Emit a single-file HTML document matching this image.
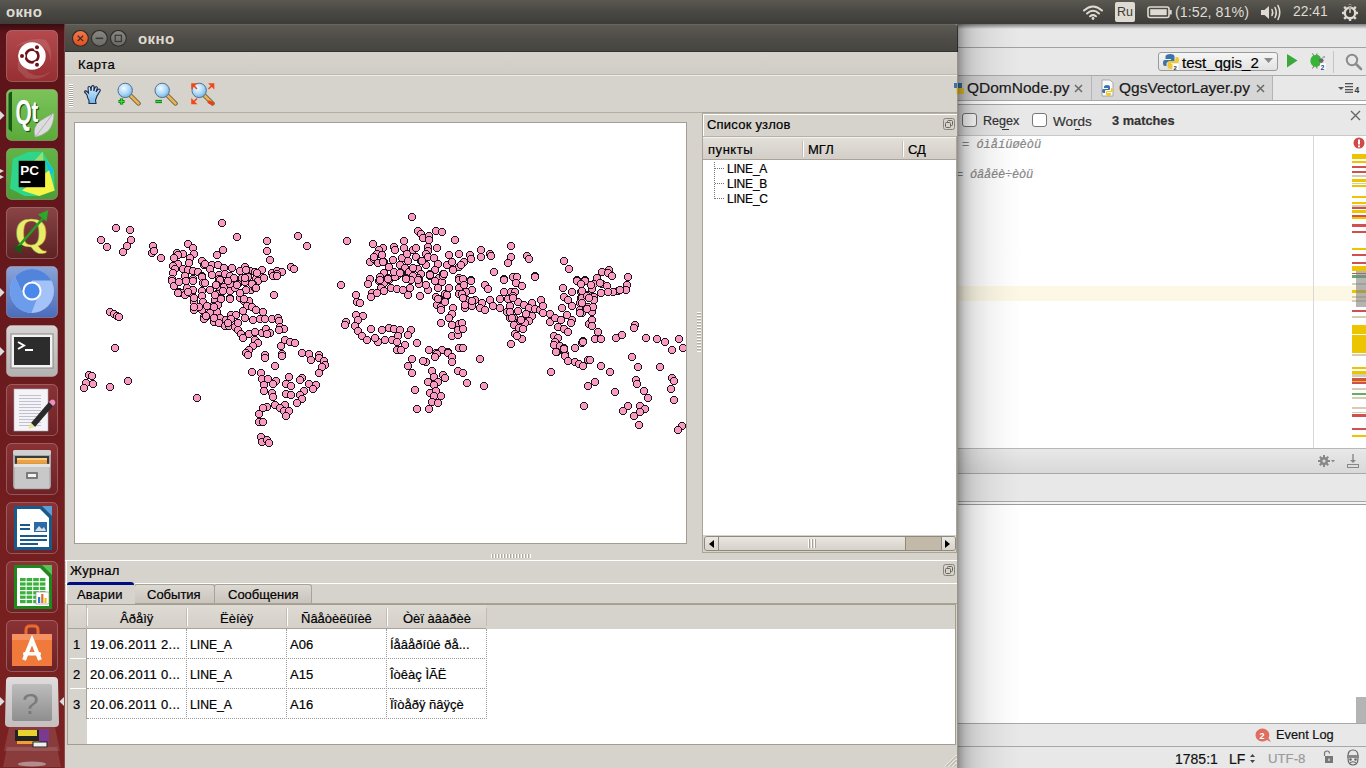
<!DOCTYPE html>
<html><head><meta charset="utf-8">
<style>
*{margin:0;padding:0;box-sizing:border-box}
html,body{width:1366px;height:768px;overflow:hidden;background:#fff;font-family:"Liberation Sans",sans-serif;position:relative}
.a{position:absolute}
.nw{white-space:nowrap}
.t{position:absolute;white-space:nowrap;font-size:13px;color:#000;line-height:1;-webkit-text-stroke:0.2px currentColor}
.pt{position:absolute;white-space:nowrap;font-size:14px;color:#dfdbd2;line-height:1}
.hl{position:absolute;height:1px}
.vl{position:absolute;width:1px}
</style></head><body>
<div class="a" style="left:0;top:0;width:1366px;height:24px;background:linear-gradient(#5a5850,#4a4944 45%,#3d3c38)"></div>
<div class="pt" style="left:6px;top:4px;font-size:15px;font-weight:bold;letter-spacing:0.3px">окно</div>
<!-- wifi -->
<svg class="a" style="left:1082px;top:4px" width="22" height="16" viewBox="0 0 22 16">
 <g fill="none" stroke="#dfdbd2" stroke-width="2" stroke-linecap="round">
  <path d="M2 6.5 Q11 -1.5 20 6.5"/><path d="M5 9.5 Q11 4 17 9.5"/><path d="M8 12.3 Q11 10 14 12.3"/>
 </g><circle cx="11" cy="14.5" r="1.4" fill="#dfdbd2"/>
</svg>
<div class="a" style="left:1115px;top:2px;width:20px;height:20px;background:#dfdbd2;border-radius:2px"></div>
<div class="pt" style="left:1117px;top:6px;font-size:12.5px;color:#3c3b37">Ru</div>
<!-- battery -->
<svg class="a" style="left:1147px;top:6px" width="26" height="13" viewBox="0 0 26 13">
 <rect x="1" y="1" width="21" height="10.5" rx="2" fill="none" stroke="#dfdbd2" stroke-width="1.6"/>
 <rect x="3.2" y="3.2" width="16.5" height="6" fill="#dfdbd2"/>
 <rect x="22.5" y="4" width="2.2" height="4.5" fill="#dfdbd2"/>
</svg>
<div class="pt" style="left:1175px;top:5px;font-size:14.3px">(1:52, 81%)</div>
<!-- volume -->
<svg class="a" style="left:1260px;top:3px" width="22" height="19" viewBox="0 0 22 19">
 <path d="M1 7 H4.5 L9 3 V16 L4.5 12 H1 Z" fill="#dfdbd2"/>
 <g fill="none" stroke="#dfdbd2" stroke-width="1.6" stroke-linecap="round">
 <path d="M12 6.5 Q13.5 9.5 12 12.5"/><path d="M15 4.5 Q17.5 9.5 15 14.5"/><path d="M18 2.5 Q21.5 9.5 18 16.5"/></g>
</svg>
<div class="pt" style="left:1293px;top:5px;font-size:13.9px">22:41</div>
<!-- power -->
<svg class="a" style="left:1341px;top:3px" width="18" height="18" viewBox="0 0 18 18">
 <g fill="#dfdbd2"><circle cx="9" cy="10" r="6.4"/>
 <rect x="7.8" y="1.5" width="2.4" height="3"/><rect x="7.8" y="15.5" width="2.4" height="2.5"/>
 <rect x="1" y="8.8" width="3" height="2.4"/><rect x="14" y="8.8" width="3" height="2.4"/>
 <rect x="2.8" y="3.6" width="2.6" height="2.4" transform="rotate(45 4.1 4.8)"/><rect x="12.6" y="13.8" width="2.6" height="2.4" transform="rotate(45 13.9 15)"/>
 <rect x="2.8" y="13.8" width="2.6" height="2.4" transform="rotate(-45 4.1 15)"/><rect x="12.6" y="3.6" width="2.6" height="2.4" transform="rotate(-45 13.9 4.8)"/>
 </g><circle cx="9" cy="10" r="4" fill="#3e3d39"/>
 <rect x="7.9" y="2" width="2.2" height="8" fill="#3e3d39"/><rect x="8.3" y="3" width="1.4" height="7" fill="#dfdbd2"/>
</svg>
<div class="a" style="left:0;top:24px;width:65px;height:744px;background:linear-gradient(#5a1419 0%,#5e151a 10%,#6a1a1d 45%,#782020 80%,#7a2121 100%)"></div>
<div class="a" style="left:0;top:24px;width:65px;height:8px;background:linear-gradient(#3a0c0f,rgba(58,12,15,0))"></div>
<div class="a" style="left:64px;top:24px;width:1px;height:744px;background:rgba(255,255,255,0.18)"></div>
<svg class="a" style="left:6px;top:30px" width="52" height="52" viewBox="0 0 52 52"><defs><linearGradient id="g0" x1="0" y1="0" x2="0" y2="1"><stop offset="0" stop-color="#b44a4e"/><stop offset="1" stop-color="#962e32"/></linearGradient></defs><rect x="0.5" y="0.5" width="51" height="51" rx="5" fill="url(#g0)" stroke="rgba(255,255,255,0.25)"/><path d="M6 20 Q20 6 40 10 Q48 20 44 34 Q46 18 30 14 Q14 12 6 20 Z" fill="rgba(255,255,255,0.12)"/><path d="M12 40 Q10 22 24 16 Q14 28 22 42 Q34 50 46 40 Q36 52 20 48 Z" fill="rgba(255,255,255,0.12)"/><circle cx="26" cy="26" r="13.7" fill="#fff"/><circle cx="26" cy="26" r="6.4" fill="none" stroke="#6e1418" stroke-width="2.6"/><circle cx="16" cy="26" r="3.6" fill="#fff"/><circle cx="31" cy="17.3" r="3.6" fill="#fff"/><circle cx="31" cy="34.7" r="3.6" fill="#fff"/><circle cx="16" cy="26" r="2" fill="#6e1418"/><circle cx="31" cy="17.3" r="2" fill="#6e1418"/><circle cx="31" cy="34.7" r="2" fill="#6e1418"/></svg>
<svg class="a" style="left:6px;top:89px" width="52" height="52" viewBox="0 0 52 52"><defs><linearGradient id="g1" x1="0" y1="0" x2="0" y2="1"><stop offset="0" stop-color="#7cc45a"/><stop offset="1" stop-color="#5aaa3a"/></linearGradient></defs><rect x="0.5" y="0.5" width="51" height="51" rx="5" fill="url(#g1)" stroke="rgba(255,255,255,0.25)"/><path d="M2.5 5 Q3 3 6 2.5 L6 43 L2.5 40 Z" fill="#145a14"/><g transform="translate(9.5,35) scale(0.58,1)"><text x="1.6" y="1.2" font-family="Liberation Sans" font-weight="bold" font-size="36" fill="#0e4a0e">Q</text><text x="0" y="0" font-family="Liberation Sans" font-weight="bold" font-size="36" fill="#fff">Q</text></g><g transform="translate(25.5,33) scale(0.7,1)"><text x="1.6" y="1.2" font-family="Liberation Sans" font-weight="bold" font-size="29" fill="#0e4a0e">t</text><text x="0" y="0" font-family="Liberation Sans" font-weight="bold" font-size="29" fill="#fff">t</text></g><path d="M29 48 Q26 38 34 32 Q40 28 48 24 Q48 36 42 42 Q36 47 29 48 Z" fill="#dcdcdc" stroke="#9a9a9a" stroke-width="0.6"/><path d="M30 47 L46 26" stroke="#888" stroke-width="0.5"/></svg>
<svg class="a" style="left:6px;top:148px" width="52" height="52" viewBox="0 0 52 52"><defs><linearGradient id="g2" x1="0" y1="0" x2="0" y2="1"><stop offset="0" stop-color="#62b446"/><stop offset="1" stop-color="#4a9e36"/></linearGradient></defs><rect x="0.5" y="0.5" width="51" height="51" rx="5" fill="url(#g2)" stroke="rgba(255,255,255,0.25)"/><path d="M6.8 10.5 L22.3 4.1 L36.8 3.7 L47.8 22.3 L48.7 42.4 L33.2 47.9 L18.6 47.9 L4 40.6 Z" fill="#2ed58a"/><path d="M27.7 13.4 L36.8 3.7 L37.8 15.2 Z" fill="#9ae070"/><path d="M39.6 12 L47.8 22.3 L44.1 28.7 Z" fill="#10c0f0"/><path d="M15.9 42.4 L43.2 22.3 L48.7 42.4 L33.2 47.9 Z" fill="#f5f545"/><rect x="12.7" y="12.8" width="26.4" height="26.4" fill="#000"/><text x="14.3" y="26.6" font-family="Liberation Sans" font-weight="bold" font-size="13.5" fill="#fff">PC</text><rect x="14.5" y="33.2" width="10" height="1.7" fill="#fff"/></svg>
<svg class="a" style="left:6px;top:207px" width="52" height="52" viewBox="0 0 52 52"><defs><linearGradient id="g3" x1="0" y1="0" x2="0" y2="1"><stop offset="0" stop-color="#8a4446"/><stop offset="1" stop-color="#5d2224"/></linearGradient></defs><rect x="0.5" y="0.5" width="51" height="51" rx="5" fill="url(#g3)" stroke="rgba(255,255,255,0.25)"/><text x="8.5" y="40" font-family="Liberation Serif" font-weight="bold" font-size="43" fill="#e8ec6a" stroke="#9a9a30" stroke-width="0.4">Q</text><path d="M12 40 L39 9" stroke="#22a022" stroke-width="2.6"/><path d="M31.8 7.6 L42.3 3 L40.5 14.4 Z" fill="#2aa82a"/><path d="M6.8 40.4 L15.9 37.7 L15.4 46.8 Z" fill="#145a14"/></svg>
<svg class="a" style="left:6px;top:266px" width="52" height="52" viewBox="0 0 52 52"><defs><linearGradient id="g4" x1="0" y1="0" x2="0" y2="1"><stop offset="0" stop-color="#8aa4d8"/><stop offset="1" stop-color="#4a6cbc"/></linearGradient></defs><rect x="0.5" y="0.5" width="51" height="51" rx="5" fill="url(#g4)" stroke="rgba(255,255,255,0.25)"/><defs><clipPath id="chc"><circle cx="26" cy="25" r="22"/></clipPath></defs><g clip-path="url(#chc)"><rect x="0" y="0" width="52" height="52" fill="#a2c2f8"/><path d="M1.7 -5 L60 -5 L60 14.5 L26 14.5 L26 25 L15.9 25.9 Z" fill="#5284dc"/><path d="M1.7 -5 L15.9 25.9 L26 25 L30.5 34.1 L20.2 60 L-5 60 L-5 -5 Z" fill="#6c9cec"/></g><circle cx="26" cy="25" r="9.6" fill="#fff"/><circle cx="26" cy="25" r="7.6" fill="#4a88ec"/></svg>
<svg class="a" style="left:6px;top:325px" width="52" height="52" viewBox="0 0 52 52"><defs><linearGradient id="g5" x1="0" y1="0" x2="0" y2="1"><stop offset="0" stop-color="#d6d4d2"/><stop offset="1" stop-color="#b4b2b0"/></linearGradient></defs><rect x="0.5" y="0.5" width="51" height="51" rx="5" fill="url(#g5)" stroke="rgba(255,255,255,0.25)"/><rect x="5" y="9" width="42" height="34" fill="#f2f2f2" stroke="#888" stroke-width="1"/><rect x="8" y="12" width="36" height="28" fill="#2c2c2c"/><path d="M12 17 L18 20.5 L12 24" stroke="#fff" stroke-width="2" fill="none"/><rect x="19" y="24" width="8" height="2" fill="#fff"/></svg>
<svg class="a" style="left:6px;top:384px" width="52" height="52" viewBox="0 0 52 52"><defs><linearGradient id="g6" x1="0" y1="0" x2="0" y2="1"><stop offset="0" stop-color="#8a3236"/><stop offset="1" stop-color="#6e2226"/></linearGradient></defs><rect x="0.5" y="0.5" width="51" height="51" rx="5" fill="url(#g6)" stroke="rgba(255,255,255,0.25)"/><rect x="8" y="5" width="34" height="42" fill="#f4f4f8" stroke="#aab" stroke-width="0.6"/><rect x="13" y="11" width="22" height="0.8" fill="#b4b4c4"/><rect x="13" y="14" width="22" height="0.8" fill="#b4b4c4"/><rect x="13" y="17" width="22" height="0.8" fill="#b4b4c4"/><rect x="13" y="20" width="22" height="0.8" fill="#b4b4c4"/><rect x="13" y="23" width="22" height="0.8" fill="#b4b4c4"/><rect x="13" y="26" width="22" height="0.8" fill="#b4b4c4"/><rect x="13" y="29" width="22" height="0.8" fill="#b4b4c4"/><rect x="13" y="32" width="22" height="0.8" fill="#b4b4c4"/><rect x="13" y="35" width="22" height="0.8" fill="#b4b4c4"/><rect x="13" y="38" width="22" height="0.8" fill="#b4b4c4"/><rect x="13" y="41" width="22" height="0.8" fill="#b4b4c4"/><path d="M25 39 L43 18 L47 22 L29 43 Z" fill="#2a2a2a"/><path d="M22 45 L25 39 L29 43 Z" fill="#f0e090"/><path d="M43 18 L45 16 Q47 15 48.5 16.5 Q50 18 49 20 L47 22 Z" fill="#e890c0"/></svg>
<svg class="a" style="left:6px;top:443px" width="52" height="52" viewBox="0 0 52 52"><defs><linearGradient id="g7" x1="0" y1="0" x2="0" y2="1"><stop offset="0" stop-color="#8a3236"/><stop offset="1" stop-color="#6e2226"/></linearGradient></defs><rect x="0.5" y="0.5" width="51" height="51" rx="5" fill="url(#g7)" stroke="rgba(255,255,255,0.25)"/><rect x="7" y="7" width="38" height="38" rx="2" fill="#a8a8a8"/><rect x="7" y="7" width="38" height="5" rx="2" fill="#d0d0d0"/><rect x="9" y="13" width="34" height="9" fill="#3a3a3a"/><rect x="11" y="15" width="30" height="7" fill="#f0a040"/><rect x="11" y="15" width="30" height="2" fill="#f8d080"/><rect x="8" y="21" width="36" height="25" rx="1.5" fill="#c8c8c8" stroke="#8a8a8a" stroke-width="0.6"/><rect x="8" y="21" width="36" height="3" fill="#e4e4e4"/><rect x="20" y="29" width="12" height="7" rx="1" fill="#7a7a7a"/><rect x="22" y="31" width="8" height="3" fill="#f4f4f4"/></svg>
<svg class="a" style="left:6px;top:502px" width="52" height="52" viewBox="0 0 52 52"><defs><linearGradient id="g8" x1="0" y1="0" x2="0" y2="1"><stop offset="0" stop-color="#8a3236"/><stop offset="1" stop-color="#6e2226"/></linearGradient></defs><rect x="0.5" y="0.5" width="51" height="51" rx="5" fill="url(#g8)" stroke="rgba(255,255,255,0.25)"/><path d="M8 4 H36 L46 14 V48 H8 Z" fill="#1a5a8a"/><path d="M11 7 H34 L43 16 V45 H11 Z" fill="#fff"/><path d="M36 4 L46 4 L46 14 Z" fill="#59a0d9"/><rect x="28" y="20" width="13" height="10" fill="#2a6aa8"/><path d="M29 29 L33 24 L36 27 L38 25 L40 29 Z" fill="#ddd"/><rect x="14" y="22" width="10" height="2" fill="#1a5a8a"/><rect x="14" y="26" width="10" height="2" fill="#1a5a8a"/><rect x="14" y="33" width="27" height="2" fill="#1a5a8a"/><rect x="14" y="37" width="27" height="2" fill="#1a5a8a"/><rect x="14" y="41" width="18" height="2" fill="#1a5a8a"/></svg>
<svg class="a" style="left:6px;top:561px" width="52" height="52" viewBox="0 0 52 52"><defs><linearGradient id="g9" x1="0" y1="0" x2="0" y2="1"><stop offset="0" stop-color="#8a3236"/><stop offset="1" stop-color="#6e2226"/></linearGradient></defs><rect x="0.5" y="0.5" width="51" height="51" rx="5" fill="url(#g9)" stroke="rgba(255,255,255,0.25)"/><path d="M8 4 H36 L46 14 V48 H8 Z" fill="#1e8a1e"/><path d="M11 7 H34 L43 16 V45 H11 Z" fill="#fff"/><path d="M36 4 L46 4 L46 14 Z" fill="#5ac05a"/><rect x="14.0" y="17.0" width="5.6" height="3.2" fill="#3cb03c"/><rect x="20.6" y="17.0" width="5.6" height="3.2" fill="#3cb03c"/><rect x="27.2" y="17.0" width="5.6" height="3.2" fill="#3cb03c"/><rect x="33.8" y="17.0" width="5.6" height="3.2" fill="#3cb03c"/><rect x="14.0" y="21.4" width="5.6" height="3.2" fill="#3cb03c"/><rect x="20.6" y="21.4" width="5.6" height="3.2" fill="#3cb03c"/><rect x="27.2" y="21.4" width="5.6" height="3.2" fill="#3cb03c"/><rect x="33.8" y="21.4" width="5.6" height="3.2" fill="#3cb03c"/><rect x="14.0" y="25.8" width="5.6" height="3.2" fill="#3cb03c"/><rect x="20.6" y="25.8" width="5.6" height="3.2" fill="#3cb03c"/><rect x="27.2" y="25.8" width="5.6" height="3.2" fill="#3cb03c"/><rect x="33.8" y="25.8" width="5.6" height="3.2" fill="#3cb03c"/><rect x="14.0" y="30.2" width="5.6" height="3.2" fill="#3cb03c"/><rect x="20.6" y="30.2" width="5.6" height="3.2" fill="#3cb03c"/><rect x="27.2" y="30.2" width="5.6" height="3.2" fill="#3cb03c"/><rect x="33.8" y="30.2" width="5.6" height="3.2" fill="#3cb03c"/><rect x="14.0" y="34.6" width="5.6" height="3.2" fill="#3cb03c"/><rect x="20.6" y="34.6" width="5.6" height="3.2" fill="#3cb03c"/><rect x="27.2" y="34.6" width="5.6" height="3.2" fill="#3cb03c"/><rect x="33.8" y="34.6" width="5.6" height="3.2" fill="#3cb03c"/><rect x="14.0" y="39.0" width="5.6" height="3.2" fill="#3cb03c"/><rect x="20.6" y="39.0" width="5.6" height="3.2" fill="#3cb03c"/><rect x="27.2" y="39.0" width="5.6" height="3.2" fill="#3cb03c"/><rect x="33.8" y="39.0" width="5.6" height="3.2" fill="#3cb03c"/><rect x="30" y="31" width="13" height="12" fill="#fff" stroke="#888" stroke-width="0.6"/><rect x="32" y="36" width="2.2" height="6" fill="#2a7ad0"/><rect x="35.2" y="33" width="2.2" height="9" fill="#e07020"/><rect x="38.4" y="37" width="2.2" height="5" fill="#f0c020"/></svg>
<svg class="a" style="left:6px;top:620px" width="52" height="52" viewBox="0 0 52 52"><defs><linearGradient id="g10" x1="0" y1="0" x2="0" y2="1"><stop offset="0" stop-color="#8a3236"/><stop offset="1" stop-color="#6e2226"/></linearGradient></defs><rect x="0.5" y="0.5" width="51" height="51" rx="5" fill="url(#g10)" stroke="rgba(255,255,255,0.25)"/><path d="M20 16 V10 Q20 6 24 6 H28 Q32 6 32 10 V16" stroke="#e86a30" stroke-width="3" fill="none"/><path d="M6 14 H46 V46 H6 Z" fill="#ef7a3c"/><path d="M6 14 H46 V20 H6 Z" fill="#f59060"/><path d="M18 40 L26 20 L34 40" stroke="#fff" stroke-width="4" fill="none"/><rect x="17" y="32" width="18" height="3.5" rx="1.5" fill="#fff"/></svg>
<svg class="a" style="left:5px;top:677px" width="54" height="50" viewBox="0 0 54 50"><defs><linearGradient id="gh" x1="0" y1="0" x2="0" y2="1"><stop offset="0" stop-color="#e0dcdc"/><stop offset="1" stop-color="#c4bebe"/></linearGradient><linearGradient id="gh2" x1="0" y1="0" x2="0" y2="1"><stop offset="0" stop-color="#bdbdbd"/><stop offset="1" stop-color="#8e8e8e"/></linearGradient></defs><path d="M5 0 H49 Q53 0 53 4 L54 46 Q54 50 50 50 H4 Q0 50 0 46 L1 4 Q1 0 5 0 Z" fill="url(#gh)"/><rect x="7" y="7" width="40" height="37" rx="2" fill="url(#gh2)"/><text x="17" y="37" font-family="Liberation Sans" font-size="30" fill="#7a7a7a">?</text></svg>
<svg class="a" style="left:3px;top:727px" width="58" height="41" viewBox="0 0 58 41"><path d="M6 0 H52 L57 24 H1 Z" fill="rgba(255,255,255,0.12)"/><path d="M12 3 H36 V14 H12 Z" fill="#222"/><path d="M15 3 H34 V9 H15 Z" fill="#e8d230"/><path d="M36 2 H46 V16 H36 Z" fill="#7a3a90"/><path d="M14 14 H36 V17 H14 Z" fill="#f0a030"/><rect x="30" y="15" width="14" height="5" fill="#eee" stroke="#222" stroke-width="1"/><path d="M4 20 H54 L58 40 H0 Z" fill="rgba(255,255,255,0.12)"/><ellipse cx="29" cy="37" rx="14" ry="2.5" fill="rgba(220,220,220,0.5)"/></svg>
<svg class="a" style="left:0;top:111px" width="5" height="9"><path d="M0 0 L4.5 4.5 L0 9 Z" fill="#dcdcdc"/></svg>
<svg class="a" style="left:0;top:288px" width="5" height="9"><path d="M0 0 L4.5 4.5 L0 9 Z" fill="#dcdcdc"/></svg>
<svg class="a" style="left:0;top:347px" width="5" height="9"><path d="M0 0 L4.5 4.5 L0 9 Z" fill="#dcdcdc"/></svg>
<svg class="a" style="left:0;top:697px" width="5" height="9"><path d="M0 0 L4.5 4.5 L0 9 Z" fill="#dcdcdc"/></svg>
<svg class="a" style="left:0;top:169px" width="5" height="4"><path d="M0 0 L4 2 L0 4 Z" fill="#dcdcdc"/></svg>
<svg class="a" style="left:0;top:175px" width="5" height="4"><path d="M0 0 L4 2 L0 4 Z" fill="#dcdcdc"/></svg>
<svg class="a" style="left:59px;top:697px" width="5" height="9"><path d="M5 0 L0.5 4.5 L5 9 Z" fill="#dcdcdc"/></svg><!-- QT WINDOW -->
<div class="a" style="left:950px;top:24px;width:8px;height:6px;background:#9a9a9a"></div>
<div class="a" style="left:65px;top:52px;width:893px;height:716px;background:#d6d2cc"></div>
<div class="a" style="left:65px;top:24px;width:893px;height:28px;border-radius:0 4px 0 0;background:linear-gradient(#5d5b53 0%,#524f4a 40%,#45443f 100%);box-shadow:inset 0 1px 0 rgba(255,255,255,0.08)"></div>
<div class="hl" style="left:65px;top:51px;width:893px;background:#34332f"></div>
<svg class="a" style="left:72px;top:30px" width="56" height="17" viewBox="0 0 56 17">
 <defs><linearGradient id="cl" x1="0" y1="0" x2="0" y2="1"><stop offset="0" stop-color="#f27a4e"/><stop offset="1" stop-color="#e44f1c"/></linearGradient>
 <linearGradient id="gr" x1="0" y1="0" x2="0" y2="1"><stop offset="0" stop-color="#8a8883"/><stop offset="1" stop-color="#6c6a66"/></linearGradient></defs>
 <circle cx="8.4" cy="8.35" r="7.9" fill="url(#cl)" stroke="#2e2d29" stroke-width="1.1"/>
 <path d="M5.6 5.6 L11.2 11.1 M11.2 5.6 L5.6 11.1" stroke="#3a2a22" stroke-width="1.3"/>
 <circle cx="27.4" cy="8.35" r="7.9" fill="url(#gr)" stroke="#2e2d29" stroke-width="1.1"/>
 <rect x="23.6" y="7.6" width="7.6" height="1.5" fill="#3a3934"/>
 <circle cx="46.4" cy="8.35" r="7.9" fill="url(#gr)" stroke="#2e2d29" stroke-width="1.1"/>
 <rect x="43.2" y="5.3" width="6.2" height="6.2" fill="none" stroke="#3a3934" stroke-width="1.2"/>
</svg>
<div class="pt" style="left:138px;top:31px;font-size:15px;font-weight:bold;letter-spacing:0.4px;color:#dfdbd2">окно</div>
<!-- menubar -->
<div class="a" style="left:65px;top:52px;width:893px;height:22px;background:linear-gradient(#d7d3cd,#d0ccc6)"></div>
<div class="hl" style="left:65px;top:74px;width:893px;background:#bdb8ae"></div>
<div class="hl" style="left:65px;top:75px;width:893px;background:#eeebe5"></div>
<div class="t" style="left:78px;top:58px;font-size:13px;letter-spacing:0.5px">Карта</div>
<!-- toolbar -->
<div class="hl" style="left:65px;top:112px;width:637px;background:#b3ada2"></div>
<svg class="a" style="left:69px;top:84px" width="5" height="23">
 <g fill="#fff">
 <rect x="0" y="0" width="4" height="1"/><rect x="0" y="2" width="4" height="1"/><rect x="0" y="4" width="4" height="1"/><rect x="0" y="6" width="4" height="1"/><rect x="0" y="8" width="4" height="1"/><rect x="0" y="10" width="4" height="1"/><rect x="0" y="12" width="4" height="1"/><rect x="0" y="14" width="4" height="1"/><rect x="0" y="16" width="4" height="1"/><rect x="0" y="18" width="4" height="1"/><rect x="0" y="20" width="4" height="1"/><rect x="0" y="22" width="4" height="1"/></g>
 <g fill="#aaa498"><rect x="0" y="1" width="4" height="1"/><rect x="0" y="3" width="4" height="1"/><rect x="0" y="5" width="4" height="1"/><rect x="0" y="7" width="4" height="1"/><rect x="0" y="9" width="4" height="1"/><rect x="0" y="11" width="4" height="1"/><rect x="0" y="13" width="4" height="1"/><rect x="0" y="15" width="4" height="1"/><rect x="0" y="17" width="4" height="1"/><rect x="0" y="19" width="4" height="1"/><rect x="0" y="21" width="4" height="1"/></g>
</svg>
<!-- hand -->
<svg class="a" style="left:83px;top:85px" width="19" height="20" viewBox="0 0 19 20">
 <defs><linearGradient id="hd" x1="0" y1="0" x2="0" y2="1"><stop offset="0" stop-color="#dcefff"/><stop offset="1" stop-color="#6fb6ea"/></linearGradient></defs>
 <path d="M4 10 L2.5 8 Q1 7 2 6 Q3 5.5 4.5 7 L5.5 8 L5 3 Q5 1.5 6.3 1.5 Q7.5 1.5 7.6 3 L8 6 L8.5 1.8 Q8.8 0.5 10 0.6 Q11.2 0.8 11 2.2 L10.8 6 L12 2.5 Q12.5 1.4 13.6 1.8 Q14.6 2.3 14.2 3.5 L13 7 L15 4.5 Q16 3.6 16.9 4.4 Q17.6 5.2 16.8 6.4 L14 11 Q13 14 12.5 15 L13 18.5 H6 L6 15.5 Q4.5 13 4 10 Z" fill="url(#hd)" stroke="#1a2a4a" stroke-width="1.1"/>
</svg>
<!-- zoom in -->
<svg class="a" style="left:116px;top:82px" width="26" height="24" viewBox="0 0 26 24">
 <defs><radialGradient id="mg" cx="0.4" cy="0.35" r="0.7"><stop offset="0" stop-color="#f4fbff"/><stop offset="0.6" stop-color="#a8d6f6"/><stop offset="1" stop-color="#6aaee0"/></radialGradient></defs>
 <path d="M14.5 13.5 L22.5 21.5" stroke="#6a5a30" stroke-width="4.4" stroke-linecap="round"/>
 <path d="M14.5 13.5 L22.5 21.5" stroke="#e6b45a" stroke-width="2.6" stroke-linecap="round"/>
 <circle cx="9.2" cy="8.4" r="7.2" fill="url(#mg)" stroke="#5a7090" stroke-width="1"/>
 <path d="M2.5 19.5 H8.5 M5.5 16.5 V22.5" stroke="#0a6a0a" stroke-width="3.2"/><path d="M2.5 19.5 H8.5 M5.5 16.5 V22.5" stroke="#3ad83a" stroke-width="1.6"/>
</svg>
<!-- zoom out -->
<svg class="a" style="left:153px;top:82px" width="26" height="24" viewBox="0 0 26 24">
 <path d="M14.5 13.5 L22.5 21.5" stroke="#6a5a30" stroke-width="4.4" stroke-linecap="round"/>
 <path d="M14.5 13.5 L22.5 21.5" stroke="#e6b45a" stroke-width="2.6" stroke-linecap="round"/>
 <circle cx="9.2" cy="8.4" r="7.2" fill="url(#mg)" stroke="#5a7090" stroke-width="1"/>
 <path d="M2.5 19.5 H9" stroke="#0a6a0a" stroke-width="3.2"/><path d="M2.5 19.5 H9" stroke="#3ad83a" stroke-width="1.6"/>
</svg>
<!-- zoom full -->
<svg class="a" style="left:190px;top:82px" width="26" height="24" viewBox="0 0 26 24">
 <path d="M14.5 13.5 L22.5 21.5" stroke="#6a5a30" stroke-width="4.4" stroke-linecap="round"/>
 <path d="M14.5 13.5 L22.5 21.5" stroke="#e6b45a" stroke-width="2.6" stroke-linecap="round"/>
 <path d="M19 20 L22.5 21.5" stroke="#e8401a" stroke-width="3" stroke-linecap="round"/>
 <circle cx="9.2" cy="8.4" r="7.2" fill="url(#mg)" stroke="#5a7090" stroke-width="1"/>
 <g stroke="#ee4a1a" stroke-width="1.6" fill="#ee4a1a">
 <path d="M3.5 3.5 L7 7"/><path d="M2 2 H5.5 L2 5.5 Z"/>
 <path d="M22 3.5 L18.5 7"/><path d="M23.5 2 H20 L23.5 5.5 Z"/>
 <path d="M3.5 20 L7 16.5"/><path d="M2 21.5 H5.5 L2 18 Z"/>
 </g>
</svg>
<!-- map box -->
<div class="a" style="left:74px;top:122px;width:613px;height:422px;background:#fff;border:1px solid #a49e92"></div>
<svg class="a" style="left:76px;top:123px" width="610" height="419"><g fill="#f99ac2" stroke="#1c1416" stroke-width="1" shape-rendering="crispEdges"><circle cx="40" cy="105" r="3.5"/><circle cx="54" cy="107" r="3.5"/><circle cx="25" cy="117" r="3.5"/><circle cx="55" cy="117" r="3.5"/><circle cx="31" cy="124" r="3.5"/><circle cx="51" cy="123" r="3.5"/><circle cx="47" cy="129" r="3.5"/><circle cx="77" cy="123" r="3.5"/><circle cx="76" cy="130" r="3.5"/><circle cx="78" cy="128" r="3.5"/><circle cx="85" cy="135" r="3.5"/><circle cx="112" cy="121" r="3.5"/><circle cx="117" cy="125" r="3.5"/><circle cx="118" cy="131" r="3.5"/><circle cx="107" cy="131" r="3.5"/><circle cx="101" cy="130" r="3.5"/><circle cx="102" cy="132" r="3.5"/><circle cx="98" cy="135" r="3.5"/><circle cx="114" cy="135" r="3.5"/><circle cx="113" cy="140" r="3.5"/><circle cx="102" cy="141" r="3.5"/><circle cx="97" cy="143" r="3.5"/><circle cx="99" cy="146" r="3.5"/><circle cx="107" cy="146" r="3.5"/><circle cx="112" cy="147" r="3.5"/><circle cx="117" cy="148" r="3.5"/><circle cx="122" cy="149" r="3.5"/><circle cx="126" cy="138" r="3.5"/><circle cx="128" cy="142" r="3.5"/><circle cx="97" cy="150" r="3.5"/><circle cx="109" cy="153" r="3.5"/><circle cx="126" cy="153" r="3.5"/><circle cx="96" cy="156" r="3.5"/><circle cx="117" cy="156" r="3.5"/><circle cx="146" cy="100" r="3.5"/><circle cx="161" cy="114" r="3.5"/><circle cx="191" cy="118" r="3.5"/><circle cx="222" cy="113" r="3.5"/><circle cx="231" cy="123" r="3.5"/><circle cx="147" cy="127" r="3.5"/><circle cx="141" cy="132" r="3.5"/><circle cx="191" cy="128" r="3.5"/><circle cx="194" cy="137" r="3.5"/><circle cx="129" cy="141" r="3.5"/><circle cx="136" cy="142" r="3.5"/><circle cx="142" cy="142" r="3.5"/><circle cx="148" cy="145" r="3.5"/><circle cx="156" cy="145" r="3.5"/><circle cx="134" cy="146" r="3.5"/><circle cx="169" cy="144" r="3.5"/><circle cx="164" cy="148" r="3.5"/><circle cx="170" cy="147" r="3.5"/><circle cx="174" cy="148" r="3.5"/><circle cx="179" cy="149" r="3.5"/><circle cx="182" cy="150" r="3.5"/><circle cx="186" cy="147" r="3.5"/><circle cx="196" cy="150" r="3.5"/><circle cx="201" cy="148" r="3.5"/><circle cx="206" cy="149" r="3.5"/><circle cx="201" cy="151" r="3.5"/><circle cx="215" cy="144" r="3.5"/><circle cx="218" cy="146" r="3.5"/><circle cx="136" cy="152" r="3.5"/><circle cx="143" cy="152" r="3.5"/><circle cx="149" cy="151" r="3.5"/><circle cx="126" cy="154" r="3.5"/><circle cx="157" cy="155" r="3.5"/><circle cx="166" cy="155" r="3.5"/><circle cx="172" cy="153" r="3.5"/><circle cx="186" cy="154" r="3.5"/><circle cx="180" cy="156" r="3.5"/><circle cx="143" cy="156" r="3.5"/><circle cx="154" cy="153" r="3.5"/><circle cx="336" cy="94" r="3.5"/><circle cx="271" cy="118" r="3.5"/><circle cx="342" cy="108" r="3.5"/><circle cx="345" cy="111" r="3.5"/><circle cx="347" cy="115" r="3.5"/><circle cx="353" cy="113" r="3.5"/><circle cx="353" cy="117" r="3.5"/><circle cx="360" cy="108" r="3.5"/><circle cx="366" cy="109" r="3.5"/><circle cx="379" cy="117" r="3.5"/><circle cx="297" cy="121" r="3.5"/><circle cx="328" cy="118" r="3.5"/><circle cx="307" cy="125" r="3.5"/><circle cx="303" cy="127" r="3.5"/><circle cx="318" cy="124" r="3.5"/><circle cx="319" cy="127" r="3.5"/><circle cx="328" cy="125" r="3.5"/><circle cx="337" cy="127" r="3.5"/><circle cx="340" cy="125" r="3.5"/><circle cx="352" cy="124" r="3.5"/><circle cx="352" cy="128" r="3.5"/><circle cx="361" cy="125" r="3.5"/><circle cx="373" cy="132" r="3.5"/><circle cx="383" cy="131" r="3.5"/><circle cx="294" cy="139" r="3.5"/><circle cx="298" cy="136" r="3.5"/><circle cx="301" cy="131" r="3.5"/><circle cx="306" cy="132" r="3.5"/><circle cx="302" cy="140" r="3.5"/><circle cx="308" cy="139" r="3.5"/><circle cx="317" cy="137" r="3.5"/><circle cx="326" cy="135" r="3.5"/><circle cx="331" cy="131" r="3.5"/><circle cx="332" cy="138" r="3.5"/><circle cx="340" cy="134" r="3.5"/><circle cx="345" cy="138" r="3.5"/><circle cx="350" cy="131" r="3.5"/><circle cx="352" cy="134" r="3.5"/><circle cx="358" cy="135" r="3.5"/><circle cx="362" cy="141" r="3.5"/><circle cx="371" cy="142" r="3.5"/><circle cx="376" cy="139" r="3.5"/><circle cx="350" cy="142" r="3.5"/><circle cx="313" cy="144" r="3.5"/><circle cx="324" cy="142" r="3.5"/><circle cx="329" cy="145" r="3.5"/><circle cx="337" cy="145" r="3.5"/><circle cx="342" cy="146" r="3.5"/><circle cx="318" cy="149" r="3.5"/><circle cx="325" cy="150" r="3.5"/><circle cx="333" cy="149" r="3.5"/><circle cx="359" cy="147" r="3.5"/><circle cx="367" cy="151" r="3.5"/><circle cx="377" cy="147" r="3.5"/><circle cx="354" cy="151" r="3.5"/><circle cx="345" cy="151" r="3.5"/><circle cx="308" cy="150" r="3.5"/><circle cx="304" cy="154" r="3.5"/><circle cx="294" cy="156" r="3.5"/><circle cx="312" cy="155" r="3.5"/><circle cx="330" cy="155" r="3.5"/><circle cx="342" cy="155" r="3.5"/><circle cx="383" cy="144" r="3.5"/><circle cx="383" cy="155" r="3.5"/><circle cx="321" cy="153" r="3.5"/><circle cx="337" cy="153" r="3.5"/><circle cx="363" cy="155" r="3.5"/><circle cx="435" cy="123" r="3.5"/><circle cx="405" cy="127" r="3.5"/><circle cx="405" cy="134" r="3.5"/><circle cx="414" cy="131" r="3.5"/><circle cx="415" cy="133" r="3.5"/><circle cx="394" cy="132" r="3.5"/><circle cx="395" cy="136" r="3.5"/><circle cx="388" cy="139" r="3.5"/><circle cx="435" cy="134" r="3.5"/><circle cx="432" cy="140" r="3.5"/><circle cx="451" cy="133" r="3.5"/><circle cx="453" cy="136" r="3.5"/><circle cx="418" cy="149" r="3.5"/><circle cx="488" cy="138" r="3.5"/><circle cx="493" cy="146" r="3.5"/><circle cx="459" cy="153" r="3.5"/><circle cx="437" cy="154" r="3.5"/><circle cx="441" cy="154" r="3.5"/><circle cx="428" cy="156" r="3.5"/><circle cx="395" cy="157" r="3.5"/><circle cx="501" cy="157" r="3.5"/><circle cx="509" cy="157" r="3.5"/><circle cx="526" cy="149" r="3.5"/><circle cx="533" cy="147" r="3.5"/><circle cx="532" cy="150" r="3.5"/><circle cx="536" cy="153" r="3.5"/><circle cx="521" cy="155" r="3.5"/><circle cx="552" cy="154" r="3.5"/><circle cx="34" cy="189" r="3.5"/><circle cx="38" cy="191" r="3.5"/><circle cx="41" cy="193" r="3.5"/><circle cx="43" cy="194" r="3.5"/><circle cx="39" cy="225" r="3.5"/><circle cx="96" cy="158" r="3.5"/><circle cx="98" cy="163" r="3.5"/><circle cx="103" cy="159" r="3.5"/><circle cx="110" cy="158" r="3.5"/><circle cx="117" cy="158" r="3.5"/><circle cx="103" cy="169" r="3.5"/><circle cx="106" cy="170" r="3.5"/><circle cx="109" cy="172" r="3.5"/><circle cx="111" cy="165" r="3.5"/><circle cx="116" cy="171" r="3.5"/><circle cx="117" cy="167" r="3.5"/><circle cx="118" cy="175" r="3.5"/><circle cx="118" cy="179" r="3.5"/><circle cx="127" cy="160" r="3.5"/><circle cx="126" cy="168" r="3.5"/><circle cx="126" cy="173" r="3.5"/><circle cx="127" cy="179" r="3.5"/><circle cx="118" cy="187" r="3.5"/><circle cx="126" cy="187" r="3.5"/><circle cx="128" cy="194" r="3.5"/><circle cx="123" cy="184" r="3.5"/><circle cx="144" cy="157" r="3.5"/><circle cx="157" cy="156" r="3.5"/><circle cx="166" cy="155" r="3.5"/><circle cx="172" cy="154" r="3.5"/><circle cx="182" cy="158" r="3.5"/><circle cx="188" cy="155" r="3.5"/><circle cx="197" cy="153" r="3.5"/><circle cx="201" cy="153" r="3.5"/><circle cx="129" cy="160" r="3.5"/><circle cx="141" cy="162" r="3.5"/><circle cx="154" cy="161" r="3.5"/><circle cx="162" cy="161" r="3.5"/><circle cx="169" cy="159" r="3.5"/><circle cx="177" cy="161" r="3.5"/><circle cx="134" cy="167" r="3.5"/><circle cx="144" cy="165" r="3.5"/><circle cx="148" cy="164" r="3.5"/><circle cx="154" cy="168" r="3.5"/><circle cx="159" cy="165" r="3.5"/><circle cx="164" cy="170" r="3.5"/><circle cx="170" cy="167" r="3.5"/><circle cx="175" cy="167" r="3.5"/><circle cx="179" cy="165" r="3.5"/><circle cx="141" cy="171" r="3.5"/><circle cx="198" cy="172" r="3.5"/><circle cx="145" cy="175" r="3.5"/><circle cx="154" cy="175" r="3.5"/><circle cx="139" cy="177" r="3.5"/><circle cx="164" cy="175" r="3.5"/><circle cx="168" cy="178" r="3.5"/><circle cx="173" cy="178" r="3.5"/><circle cx="171" cy="183" r="3.5"/><circle cx="176" cy="184" r="3.5"/><circle cx="137" cy="183" r="3.5"/><circle cx="131" cy="183" r="3.5"/><circle cx="142" cy="182" r="3.5"/><circle cx="167" cy="188" r="3.5"/><circle cx="180" cy="187" r="3.5"/><circle cx="187" cy="189" r="3.5"/><circle cx="141" cy="189" r="3.5"/><circle cx="155" cy="192" r="3.5"/><circle cx="160" cy="192" r="3.5"/><circle cx="131" cy="193" r="3.5"/><circle cx="134" cy="190" r="3.5"/><circle cx="128" cy="196" r="3.5"/><circle cx="139" cy="195" r="3.5"/><circle cx="144" cy="195" r="3.5"/><circle cx="150" cy="197" r="3.5"/><circle cx="155" cy="196" r="3.5"/><circle cx="169" cy="195" r="3.5"/><circle cx="177" cy="197" r="3.5"/><circle cx="184" cy="196" r="3.5"/><circle cx="189" cy="196" r="3.5"/><circle cx="196" cy="196" r="3.5"/><circle cx="202" cy="195" r="3.5"/><circle cx="203" cy="198" r="3.5"/><circle cx="138" cy="199" r="3.5"/><circle cx="143" cy="200" r="3.5"/><circle cx="149" cy="203" r="3.5"/><circle cx="153" cy="203" r="3.5"/><circle cx="159" cy="204" r="3.5"/><circle cx="162" cy="200" r="3.5"/><circle cx="204" cy="204" r="3.5"/><circle cx="208" cy="206" r="3.5"/><circle cx="203" cy="207" r="3.5"/><circle cx="162" cy="207" r="3.5"/><circle cx="165" cy="211" r="3.5"/><circle cx="167" cy="215" r="3.5"/><circle cx="173" cy="211" r="3.5"/><circle cx="179" cy="209" r="3.5"/><circle cx="186" cy="210" r="3.5"/><circle cx="190" cy="206" r="3.5"/><circle cx="194" cy="210" r="3.5"/><circle cx="191" cy="211" r="3.5"/><circle cx="179" cy="217" r="3.5"/><circle cx="182" cy="220" r="3.5"/><circle cx="177" cy="223" r="3.5"/><circle cx="209" cy="217" r="3.5"/><circle cx="214" cy="219" r="3.5"/><circle cx="219" cy="220" r="3.5"/><circle cx="205" cy="223" r="3.5"/><circle cx="173" cy="227" r="3.5"/><circle cx="170" cy="230" r="3.5"/><circle cx="226" cy="230" r="3.5"/><circle cx="233" cy="231" r="3.5"/><circle cx="206" cy="231" r="3.5"/><circle cx="189" cy="232" r="3.5"/><circle cx="243" cy="232" r="3.5"/><circle cx="265" cy="162" r="3.5"/><circle cx="294" cy="156" r="3.5"/><circle cx="292" cy="161" r="3.5"/><circle cx="303" cy="158" r="3.5"/><circle cx="308" cy="160" r="3.5"/><circle cx="313" cy="157" r="3.5"/><circle cx="319" cy="154" r="3.5"/><circle cx="330" cy="156" r="3.5"/><circle cx="335" cy="157" r="3.5"/><circle cx="343" cy="157" r="3.5"/><circle cx="343" cy="161" r="3.5"/><circle cx="350" cy="162" r="3.5"/><circle cx="354" cy="153" r="3.5"/><circle cx="359" cy="158" r="3.5"/><circle cx="366" cy="159" r="3.5"/><circle cx="367" cy="153" r="3.5"/><circle cx="305" cy="165" r="3.5"/><circle cx="315" cy="165" r="3.5"/><circle cx="321" cy="166" r="3.5"/><circle cx="327" cy="167" r="3.5"/><circle cx="334" cy="165" r="3.5"/><circle cx="352" cy="167" r="3.5"/><circle cx="362" cy="165" r="3.5"/><circle cx="373" cy="165" r="3.5"/><circle cx="383" cy="165" r="3.5"/><circle cx="383" cy="157" r="3.5"/><circle cx="280" cy="172" r="3.5"/><circle cx="296" cy="170" r="3.5"/><circle cx="295" cy="174" r="3.5"/><circle cx="301" cy="170" r="3.5"/><circle cx="308" cy="168" r="3.5"/><circle cx="332" cy="172" r="3.5"/><circle cx="344" cy="173" r="3.5"/><circle cx="360" cy="174" r="3.5"/><circle cx="363" cy="176" r="3.5"/><circle cx="369" cy="171" r="3.5"/><circle cx="371" cy="173" r="3.5"/><circle cx="383" cy="171" r="3.5"/><circle cx="281" cy="179" r="3.5"/><circle cx="284" cy="180" r="3.5"/><circle cx="361" cy="182" r="3.5"/><circle cx="365" cy="184" r="3.5"/><circle cx="369" cy="179" r="3.5"/><circle cx="365" cy="187" r="3.5"/><circle cx="377" cy="185" r="3.5"/><circle cx="376" cy="191" r="3.5"/><circle cx="373" cy="195" r="3.5"/><circle cx="280" cy="192" r="3.5"/><circle cx="287" cy="193" r="3.5"/><circle cx="282" cy="197" r="3.5"/><circle cx="270" cy="199" r="3.5"/><circle cx="269" cy="202" r="3.5"/><circle cx="279" cy="203" r="3.5"/><circle cx="365" cy="200" r="3.5"/><circle cx="376" cy="202" r="3.5"/><circle cx="383" cy="201" r="3.5"/><circle cx="282" cy="208" r="3.5"/><circle cx="286" cy="213" r="3.5"/><circle cx="291" cy="217" r="3.5"/><circle cx="295" cy="206" r="3.5"/><circle cx="306" cy="207" r="3.5"/><circle cx="313" cy="205" r="3.5"/><circle cx="318" cy="206" r="3.5"/><circle cx="324" cy="207" r="3.5"/><circle cx="335" cy="207" r="3.5"/><circle cx="332" cy="212" r="3.5"/><circle cx="322" cy="213" r="3.5"/><circle cx="316" cy="217" r="3.5"/><circle cx="309" cy="217" r="3.5"/><circle cx="302" cy="219" r="3.5"/><circle cx="299" cy="215" r="3.5"/><circle cx="321" cy="219" r="3.5"/><circle cx="329" cy="222" r="3.5"/><circle cx="341" cy="220" r="3.5"/><circle cx="321" cy="227" r="3.5"/><circle cx="325" cy="227" r="3.5"/><circle cx="353" cy="227" r="3.5"/><circle cx="360" cy="230" r="3.5"/><circle cx="366" cy="227" r="3.5"/><circle cx="372" cy="229" r="3.5"/><circle cx="376" cy="213" r="3.5"/><circle cx="382" cy="212" r="3.5"/><circle cx="382" cy="207" r="3.5"/><circle cx="383" cy="225" r="3.5"/><circle cx="395" cy="158" r="3.5"/><circle cx="387" cy="156" r="3.5"/><circle cx="388" cy="162" r="3.5"/><circle cx="409" cy="162" r="3.5"/><circle cx="412" cy="166" r="3.5"/><circle cx="428" cy="157" r="3.5"/><circle cx="437" cy="154" r="3.5"/><circle cx="441" cy="154" r="3.5"/><circle cx="440" cy="160" r="3.5"/><circle cx="446" cy="163" r="3.5"/><circle cx="459" cy="154" r="3.5"/><circle cx="487" cy="165" r="3.5"/><circle cx="496" cy="169" r="3.5"/><circle cx="501" cy="158" r="3.5"/><circle cx="509" cy="158" r="3.5"/><circle cx="505" cy="161" r="3.5"/><circle cx="396" cy="167" r="3.5"/><circle cx="390" cy="169" r="3.5"/><circle cx="386" cy="171" r="3.5"/><circle cx="428" cy="169" r="3.5"/><circle cx="435" cy="169" r="3.5"/><circle cx="439" cy="169" r="3.5"/><circle cx="437" cy="173" r="3.5"/><circle cx="424" cy="176" r="3.5"/><circle cx="432" cy="176" r="3.5"/><circle cx="442" cy="179" r="3.5"/><circle cx="448" cy="182" r="3.5"/><circle cx="456" cy="180" r="3.5"/><circle cx="465" cy="177" r="3.5"/><circle cx="414" cy="177" r="3.5"/><circle cx="391" cy="177" r="3.5"/><circle cx="399" cy="177" r="3.5"/><circle cx="406" cy="180" r="3.5"/><circle cx="488" cy="174" r="3.5"/><circle cx="492" cy="177" r="3.5"/><circle cx="505" cy="169" r="3.5"/><circle cx="505" cy="175" r="3.5"/><circle cx="504" cy="180" r="3.5"/><circle cx="512" cy="172" r="3.5"/><circle cx="389" cy="185" r="3.5"/><circle cx="396" cy="183" r="3.5"/><circle cx="404" cy="185" r="3.5"/><circle cx="409" cy="187" r="3.5"/><circle cx="417" cy="183" r="3.5"/><circle cx="424" cy="185" r="3.5"/><circle cx="434" cy="183" r="3.5"/><circle cx="442" cy="188" r="3.5"/><circle cx="453" cy="185" r="3.5"/><circle cx="459" cy="186" r="3.5"/><circle cx="464" cy="187" r="3.5"/><circle cx="467" cy="183" r="3.5"/><circle cx="431" cy="189" r="3.5"/><circle cx="434" cy="195" r="3.5"/><circle cx="438" cy="195" r="3.5"/><circle cx="450" cy="192" r="3.5"/><circle cx="456" cy="193" r="3.5"/><circle cx="467" cy="190" r="3.5"/><circle cx="474" cy="191" r="3.5"/><circle cx="486" cy="185" r="3.5"/><circle cx="491" cy="192" r="3.5"/><circle cx="496" cy="183" r="3.5"/><circle cx="504" cy="187" r="3.5"/><circle cx="505" cy="190" r="3.5"/><circle cx="512" cy="184" r="3.5"/><circle cx="444" cy="198" r="3.5"/><circle cx="453" cy="198" r="3.5"/><circle cx="449" cy="200" r="3.5"/><circle cx="438" cy="202" r="3.5"/><circle cx="443" cy="205" r="3.5"/><circle cx="447" cy="206" r="3.5"/><circle cx="474" cy="199" r="3.5"/><circle cx="479" cy="195" r="3.5"/><circle cx="485" cy="197" r="3.5"/><circle cx="496" cy="197" r="3.5"/><circle cx="495" cy="200" r="3.5"/><circle cx="482" cy="204" r="3.5"/><circle cx="488" cy="206" r="3.5"/><circle cx="492" cy="209" r="3.5"/><circle cx="386" cy="200" r="3.5"/><circle cx="387" cy="206" r="3.5"/><circle cx="513" cy="201" r="3.5"/><circle cx="439" cy="211" r="3.5"/><circle cx="446" cy="216" r="3.5"/><circle cx="441" cy="213" r="3.5"/><circle cx="435" cy="221" r="3.5"/><circle cx="478" cy="213" r="3.5"/><circle cx="482" cy="215" r="3.5"/><circle cx="479" cy="219" r="3.5"/><circle cx="478" cy="222" r="3.5"/><circle cx="484" cy="223" r="3.5"/><circle cx="488" cy="225" r="3.5"/><circle cx="481" cy="229" r="3.5"/><circle cx="489" cy="231" r="3.5"/><circle cx="499" cy="225" r="3.5"/><circle cx="507" cy="218" r="3.5"/><circle cx="506" cy="220" r="3.5"/><circle cx="387" cy="225" r="3.5"/><circle cx="521" cy="155" r="3.5"/><circle cx="518" cy="161" r="3.5"/><circle cx="526" cy="161" r="3.5"/><circle cx="531" cy="163" r="3.5"/><circle cx="551" cy="162" r="3.5"/><circle cx="550" cy="167" r="3.5"/><circle cx="542" cy="168" r="3.5"/><circle cx="544" cy="167" r="3.5"/><circle cx="537" cy="169" r="3.5"/><circle cx="532" cy="169" r="3.5"/><circle cx="525" cy="170" r="3.5"/><circle cx="516" cy="166" r="3.5"/><circle cx="506" cy="168" r="3.5"/><circle cx="506" cy="175" r="3.5"/><circle cx="518" cy="174" r="3.5"/><circle cx="511" cy="173" r="3.5"/><circle cx="518" cy="177" r="3.5"/><circle cx="506" cy="180" r="3.5"/><circle cx="510" cy="186" r="3.5"/><circle cx="516" cy="185" r="3.5"/><circle cx="516" cy="189" r="3.5"/><circle cx="506" cy="190" r="3.5"/><circle cx="516" cy="197" r="3.5"/><circle cx="516" cy="203" r="3.5"/><circle cx="522" cy="209" r="3.5"/><circle cx="519" cy="216" r="3.5"/><circle cx="525" cy="216" r="3.5"/><circle cx="540" cy="215" r="3.5"/><circle cx="546" cy="212" r="3.5"/><circle cx="559" cy="202" r="3.5"/><circle cx="558" cy="205" r="3.5"/><circle cx="570" cy="215" r="3.5"/><circle cx="581" cy="216" r="3.5"/><circle cx="589" cy="219" r="3.5"/><circle cx="603" cy="216" r="3.5"/><circle cx="507" cy="219" r="3.5"/><circle cx="607" cy="225" r="3.5"/><circle cx="596" cy="227" r="3.5"/><circle cx="13" cy="252" r="3.5"/><circle cx="16" cy="253" r="3.5"/><circle cx="10" cy="260" r="3.5"/><circle cx="17" cy="261" r="3.5"/><circle cx="8" cy="265" r="3.5"/><circle cx="34" cy="264" r="3.5"/><circle cx="52" cy="258" r="3.5"/><circle cx="121" cy="275" r="3.5"/><circle cx="172" cy="232" r="3.5"/><circle cx="189" cy="235" r="3.5"/><circle cx="206" cy="233" r="3.5"/><circle cx="199" cy="243" r="3.5"/><circle cx="235" cy="237" r="3.5"/><circle cx="243" cy="235" r="3.5"/><circle cx="248" cy="238" r="3.5"/><circle cx="249" cy="242" r="3.5"/><circle cx="246" cy="244" r="3.5"/><circle cx="243" cy="250" r="3.5"/><circle cx="176" cy="249" r="3.5"/><circle cx="185" cy="250" r="3.5"/><circle cx="186" cy="256" r="3.5"/><circle cx="192" cy="256" r="3.5"/><circle cx="200" cy="258" r="3.5"/><circle cx="197" cy="261" r="3.5"/><circle cx="188" cy="262" r="3.5"/><circle cx="188" cy="268" r="3.5"/><circle cx="196" cy="270" r="3.5"/><circle cx="197" cy="274" r="3.5"/><circle cx="213" cy="254" r="3.5"/><circle cx="210" cy="261" r="3.5"/><circle cx="215" cy="263" r="3.5"/><circle cx="210" cy="271" r="3.5"/><circle cx="215" cy="272" r="3.5"/><circle cx="226" cy="255" r="3.5"/><circle cx="224" cy="257" r="3.5"/><circle cx="233" cy="261" r="3.5"/><circle cx="240" cy="262" r="3.5"/><circle cx="237" cy="266" r="3.5"/><circle cx="228" cy="268" r="3.5"/><circle cx="224" cy="272" r="3.5"/><circle cx="226" cy="276" r="3.5"/><circle cx="221" cy="280" r="3.5"/><circle cx="199" cy="282" r="3.5"/><circle cx="191" cy="284" r="3.5"/><circle cx="187" cy="285" r="3.5"/><circle cx="209" cy="282" r="3.5"/><circle cx="204" cy="285" r="3.5"/><circle cx="208" cy="288" r="3.5"/><circle cx="213" cy="288" r="3.5"/><circle cx="210" cy="293" r="3.5"/><circle cx="183" cy="291" r="3.5"/><circle cx="183" cy="299" r="3.5"/><circle cx="187" cy="299" r="3.5"/><circle cx="185" cy="314" r="3.5"/><circle cx="186" cy="319" r="3.5"/><circle cx="191" cy="317" r="3.5"/><circle cx="193" cy="320" r="3.5"/><circle cx="361" cy="231" r="3.5"/><circle cx="359" cy="234" r="3.5"/><circle cx="372" cy="230" r="3.5"/><circle cx="376" cy="234" r="3.5"/><circle cx="376" cy="239" r="3.5"/><circle cx="382" cy="248" r="3.5"/><circle cx="336" cy="236" r="3.5"/><circle cx="350" cy="239" r="3.5"/><circle cx="347" cy="238" r="3.5"/><circle cx="332" cy="243" r="3.5"/><circle cx="336" cy="250" r="3.5"/><circle cx="356" cy="248" r="3.5"/><circle cx="367" cy="252" r="3.5"/><circle cx="369" cy="255" r="3.5"/><circle cx="358" cy="254" r="3.5"/><circle cx="352" cy="259" r="3.5"/><circle cx="362" cy="259" r="3.5"/><circle cx="358" cy="262" r="3.5"/><circle cx="339" cy="267" r="3.5"/><circle cx="354" cy="270" r="3.5"/><circle cx="360" cy="268" r="3.5"/><circle cx="358" cy="273" r="3.5"/><circle cx="365" cy="273" r="3.5"/><circle cx="356" cy="279" r="3.5"/><circle cx="362" cy="280" r="3.5"/><circle cx="341" cy="286" r="3.5"/><circle cx="353" cy="286" r="3.5"/><circle cx="404" cy="236" r="3.5"/><circle cx="387" cy="250" r="3.5"/><circle cx="391" cy="260" r="3.5"/><circle cx="408" cy="263" r="3.5"/><circle cx="475" cy="249" r="3.5"/><circle cx="480" cy="229" r="3.5"/><circle cx="488" cy="226" r="3.5"/><circle cx="489" cy="233" r="3.5"/><circle cx="492" cy="238" r="3.5"/><circle cx="499" cy="239" r="3.5"/><circle cx="503" cy="241" r="3.5"/><circle cx="507" cy="243" r="3.5"/><circle cx="512" cy="237" r="3.5"/><circle cx="512" cy="263" r="3.5"/><circle cx="508" cy="283" r="3.5"/><circle cx="556" cy="234" r="3.5"/><circle cx="514" cy="237" r="3.5"/><circle cx="525" cy="243" r="3.5"/><circle cx="534" cy="249" r="3.5"/><circle cx="562" cy="244" r="3.5"/><circle cx="584" cy="244" r="3.5"/><circle cx="596" cy="255" r="3.5"/><circle cx="598" cy="258" r="3.5"/><circle cx="595" cy="266" r="3.5"/><circle cx="598" cy="277" r="3.5"/><circle cx="560" cy="257" r="3.5"/><circle cx="561" cy="261" r="3.5"/><circle cx="568" cy="268" r="3.5"/><circle cx="572" cy="275" r="3.5"/><circle cx="539" cy="269" r="3.5"/><circle cx="519" cy="259" r="3.5"/><circle cx="552" cy="283" r="3.5"/><circle cx="547" cy="288" r="3.5"/><circle cx="564" cy="283" r="3.5"/><circle cx="569" cy="286" r="3.5"/><circle cx="564" cy="289" r="3.5"/><circle cx="558" cy="293" r="3.5"/><circle cx="563" cy="302" r="3.5"/><circle cx="606" cy="303" r="3.5"/><circle cx="602" cy="307" r="3.5"/><circle cx="154" cy="161" r="3.5"/><circle cx="147" cy="168" r="3.5"/><circle cx="158" cy="155" r="3.5"/><circle cx="161" cy="162" r="3.5"/><circle cx="170" cy="167" r="3.5"/><circle cx="176" cy="161" r="3.5"/><circle cx="180" cy="165" r="3.5"/><circle cx="168" cy="176" r="3.5"/><circle cx="145" cy="176" r="3.5"/><circle cx="154" cy="176" r="3.5"/><circle cx="139" cy="172" r="3.5"/><circle cx="164" cy="170" r="3.5"/><circle cx="152" cy="158" r="3.5"/><circle cx="140" cy="162" r="3.5"/><circle cx="170" cy="147" r="3.5"/><circle cx="169" cy="155" r="3.5"/><circle cx="181" cy="150" r="3.5"/><circle cx="102" cy="170" r="3.5"/><circle cx="112" cy="169" r="3.5"/><circle cx="118" cy="175" r="3.5"/><circle cx="118" cy="184" r="3.5"/><circle cx="130" cy="193" r="3.5"/><circle cx="138" cy="195" r="3.5"/><circle cx="152" cy="200" r="3.5"/><circle cx="138" cy="184" r="3.5"/><circle cx="337" cy="145" r="3.5"/><circle cx="330" cy="156" r="3.5"/><circle cx="342" cy="157" r="3.5"/><circle cx="350" cy="162" r="3.5"/><circle cx="354" cy="152" r="3.5"/><circle cx="346" cy="138" r="3.5"/><circle cx="368" cy="151" r="3.5"/><circle cx="373" cy="165" r="3.5"/><circle cx="371" cy="172" r="3.5"/><circle cx="362" cy="176" r="3.5"/><circle cx="318" cy="149" r="3.5"/><circle cx="324" cy="150" r="3.5"/><circle cx="312" cy="156" r="3.5"/><circle cx="304" cy="157" r="3.5"/><circle cx="298" cy="134" r="3.5"/><circle cx="307" cy="139" r="3.5"/><circle cx="377" cy="147" r="3.5"/><circle cx="385" cy="142" r="3.5"/><circle cx="396" cy="178" r="3.5"/><circle cx="387" cy="175" r="3.5"/><circle cx="389" cy="182" r="3.5"/><circle cx="437" cy="175" r="3.5"/><circle cx="434" cy="189" r="3.5"/><circle cx="442" cy="188" r="3.5"/><circle cx="450" cy="191" r="3.5"/><circle cx="445" cy="197" r="3.5"/><circle cx="436" cy="195" r="3.5"/><circle cx="515" cy="162" r="3.5"/><circle cx="524" cy="160" r="3.5"/><circle cx="513" cy="175" r="3.5"/><circle cx="517" cy="184" r="3.5"/><circle cx="511" cy="186" r="3.5"/><circle cx="504" cy="190" r="3.5"/></g></svg>
<!-- vertical splitter grip -->
<svg class="a" style="left:697px;top:312px" width="5" height="40">
 <g fill="#fff"><rect x="0" y="0" width="4" height="1"/><rect x="0" y="3" width="4" height="1"/><rect x="0" y="6" width="4" height="1"/><rect x="0" y="9" width="4" height="1"/><rect x="0" y="12" width="4" height="1"/><rect x="0" y="15" width="4" height="1"/><rect x="0" y="18" width="4" height="1"/><rect x="0" y="21" width="4" height="1"/><rect x="0" y="24" width="4" height="1"/><rect x="0" y="27" width="4" height="1"/><rect x="0" y="30" width="4" height="1"/><rect x="0" y="33" width="4" height="1"/><rect x="0" y="36" width="4" height="1"/><rect x="0" y="39" width="4" height="1"/></g>
 <g fill="#b0aa9e"><rect x="0" y="1" width="4" height="1"/><rect x="0" y="4" width="4" height="1"/><rect x="0" y="7" width="4" height="1"/><rect x="0" y="10" width="4" height="1"/><rect x="0" y="13" width="4" height="1"/><rect x="0" y="16" width="4" height="1"/><rect x="0" y="19" width="4" height="1"/><rect x="0" y="22" width="4" height="1"/><rect x="0" y="25" width="4" height="1"/><rect x="0" y="28" width="4" height="1"/><rect x="0" y="31" width="4" height="1"/><rect x="0" y="34" width="4" height="1"/><rect x="0" y="37" width="4" height="1"/></g>
</svg>
<!-- dock: list of nodes -->
<div class="a" style="left:702px;top:112px;width:256px;height:441px;border:1px solid #aaa498;border-right:none"></div>
<div class="hl" style="left:702px;top:113px;width:256px;background:#b6b0a5"></div>
<div class="a" style="left:703px;top:114px;width:255px;height:22px;background:#d6d2cc;border-top:1px solid #fff;border-left:1px solid #fff"></div>
<div class="hl" style="left:703px;top:136px;width:255px;background:#b8b2a6"></div>
<div class="t" style="left:707px;top:118px;font-size:13px;letter-spacing:0.22px">Список узлов</div>
<svg class="a" style="left:943px;top:118px" width="12" height="12" viewBox="0 0 12 12">
 <rect x="0.5" y="0.5" width="11" height="11" rx="2" fill="none" stroke="#8a857c"/>
 <rect x="4.5" y="2.5" width="5" height="5" rx="1" fill="none" stroke="#6a655c"/><rect x="2.5" y="4.5" width="5" height="5" rx="1" fill="#d6d2cc" stroke="#6a655c"/>
</svg>
<!-- tree header -->
<div class="a" style="left:703px;top:137px;width:253px;height:23px;background:linear-gradient(#e2ded8,#d2cec7);border-top:1px solid #f4f2ee"></div>
<div class="hl" style="left:703px;top:159px;width:253px;background:#aaa498"></div>
<div class="vl" style="left:803px;top:141px;height:16px;background:#fff"></div>
<div class="vl" style="left:802px;top:141px;height:16px;background:#c2bdb3"></div>
<div class="vl" style="left:903px;top:141px;height:16px;background:#fff"></div>
<div class="vl" style="left:902px;top:141px;height:16px;background:#c2bdb3"></div>
<div class="t" style="left:708px;top:143px;font-size:13px;letter-spacing:0.55px">пункты</div>
<div class="t" style="left:808px;top:143px;font-size:13px">МГЛ</div>
<div class="t" style="left:908px;top:143px;font-size:13px">СД</div>
<!-- tree body -->
<div class="a" style="left:703px;top:160px;width:253px;height:375px;background:#fff"></div>
<div class="a" style="left:714px;top:162px;width:1px;height:37px;border-left:1px dotted #777"></div>
<div class="a" style="left:715px;top:168px;width:9px;height:1px;border-top:1px dotted #777"></div>
<div class="a" style="left:715px;top:183px;width:9px;height:1px;border-top:1px dotted #777"></div>
<div class="a" style="left:715px;top:198px;width:9px;height:1px;border-top:1px dotted #777"></div>
<div class="t" style="left:727px;top:163px;font-size:12px;letter-spacing:-0.2px">LINE_A</div>
<div class="t" style="left:727px;top:178px;font-size:12px;letter-spacing:-0.2px">LINE_B</div>
<div class="t" style="left:727px;top:193px;font-size:12px;letter-spacing:-0.2px">LINE_C</div>
<div class="vl" style="left:956px;top:137px;height:415px;background:#aaa498"></div>
<!-- h scrollbar -->
<div class="a" style="left:703px;top:535px;width:253px;height:17px;background:#d6d2cc"></div>
<div class="a" style="left:704px;top:536px;width:252px;height:15px;border:1px solid #8f897d;border-radius:3px;background:#c2b9a8;overflow:hidden">
  <div class="a" style="left:0;top:0;width:14px;height:13px;background:linear-gradient(#ece9e3,#d8d4cc);border-right:1px solid #8f897d"></div>
  <div class="a" style="left:14px;top:0;width:187px;height:13px;background:linear-gradient(#eae7e1,#d6d1c9);border-right:1px solid #8f897d"></div>
  <div class="a" style="left:236px;top:0;width:15px;height:13px;background:linear-gradient(#ece9e3,#d8d4cc);border-left:1px solid #8f897d"></div>
</div>
<svg class="a" style="left:707px;top:539px" width="9" height="10"><path d="M2 5 L7 1 V9 Z" fill="#000"/></svg>
<svg class="a" style="left:943px;top:539px" width="9" height="10"><path d="M7 5 L2 1 V9 Z" fill="#000"/></svg>
<svg class="a" style="left:807px;top:539px" width="10" height="9"><g fill="#fff"><rect x="1" y="0" width="1" height="9"/><rect x="4" y="0" width="1" height="9"/><rect x="7" y="0" width="1" height="9"/></g><g fill="#a8a294"><rect x="2" y="0" width="1" height="9"/><rect x="5" y="0" width="1" height="9"/><rect x="8" y="0" width="1" height="9"/></g></svg>
<!-- horizontal splitter grip -->
<svg class="a" style="left:491px;top:554px" width="41" height="5">
 <g fill="#fff"><rect x="0" y="0" width="1" height="4"/><rect x="3" y="0" width="1" height="4"/><rect x="6" y="0" width="1" height="4"/><rect x="9" y="0" width="1" height="4"/><rect x="12" y="0" width="1" height="4"/><rect x="15" y="0" width="1" height="4"/><rect x="18" y="0" width="1" height="4"/><rect x="21" y="0" width="1" height="4"/><rect x="24" y="0" width="1" height="4"/><rect x="27" y="0" width="1" height="4"/><rect x="30" y="0" width="1" height="4"/><rect x="33" y="0" width="1" height="4"/><rect x="36" y="0" width="1" height="4"/><rect x="39" y="0" width="1" height="4"/></g>
 <g fill="#b0aa9e"><rect x="1" y="0" width="1" height="4"/><rect x="4" y="0" width="1" height="4"/><rect x="7" y="0" width="1" height="4"/><rect x="10" y="0" width="1" height="4"/><rect x="13" y="0" width="1" height="4"/><rect x="16" y="0" width="1" height="4"/><rect x="19" y="0" width="1" height="4"/><rect x="22" y="0" width="1" height="4"/><rect x="25" y="0" width="1" height="4"/><rect x="28" y="0" width="1" height="4"/><rect x="31" y="0" width="1" height="4"/><rect x="34" y="0" width="1" height="4"/><rect x="37" y="0" width="1" height="4"/></g>
</svg>
<!-- journal dock -->
<div class="hl" style="left:65px;top:560px;width:893px;background:#fff"></div>
<div class="vl" style="left:66px;top:560px;height:24px;background:#fff"></div>
<div class="t" style="left:70px;top:564px;font-size:13px;letter-spacing:0.4px">Журнал</div>
<svg class="a" style="left:943px;top:564px" width="12" height="12" viewBox="0 0 12 12">
 <rect x="0.5" y="0.5" width="11" height="11" rx="2" fill="none" stroke="#8a857c"/>
 <rect x="4.5" y="2.5" width="5" height="5" rx="1" fill="none" stroke="#6a655c"/><rect x="2.5" y="4.5" width="5" height="5" rx="1" fill="#d6d2cc" stroke="#6a655c"/>
</svg>
<div class="hl" style="left:65px;top:583px;width:893px;background:#fff"></div>
<!-- tabs -->
<div class="a" style="left:134px;top:584px;width:81px;height:20px;background:linear-gradient(#dcd8d2,#c8c3bb);border:1px solid #aaa498;border-bottom:none;border-radius:3px 3px 0 0"></div>
<div class="a" style="left:214px;top:584px;width:98px;height:20px;background:linear-gradient(#dcd8d2,#c8c3bb);border:1px solid #aaa498;border-bottom:none;border-radius:3px 3px 0 0"></div>
<div class="hl" style="left:65px;top:603px;width:893px;background:#aaa498"></div>
<div class="a" style="left:66px;top:583px;width:69px;height:21px;background:#d6d2cc;border-left:1px solid #fff"></div>
<div class="a" style="left:67px;top:582px;width:67px;height:3px;background:#000c82;border-radius:3px 3px 0 0"></div>
<div class="t" style="left:77px;top:588px;font-size:13px;letter-spacing:0.2px">Аварии</div>
<div class="t" style="left:147px;top:588px;font-size:13px">События</div>
<div class="t" style="left:228px;top:588px;font-size:13px">Сообщения</div>
<!-- table -->
<div class="a" style="left:67px;top:604px;width:889px;height:141px;border:1px solid #a39c8f;background:#fff"></div>
<div class="a" style="left:68px;top:605px;width:19px;height:139px;background:#d6d2cc"></div>
<div class="a" style="left:68px;top:605px;width:887px;height:24px;background:#d6d2cc"></div>
<div class="a" style="left:68px;top:605px;width:418px;height:24px;background:linear-gradient(#dedad4,#d4d0c9)"></div>
<div class="hl" style="left:68px;top:628px;width:418px;background:#aaa498"></div>
<div class="vl" style="left:86px;top:605px;height:24px;background:#c2bdb3"></div>
<div class="vl" style="left:87px;top:608px;height:18px;background:#fff"></div>
<div class="vl" style="left:186px;top:608px;height:18px;background:#c2bdb3"></div><div class="vl" style="left:187px;top:608px;height:18px;background:#fff"></div>
<div class="vl" style="left:286px;top:608px;height:18px;background:#c2bdb3"></div><div class="vl" style="left:287px;top:608px;height:18px;background:#fff"></div>
<div class="vl" style="left:386px;top:608px;height:18px;background:#c2bdb3"></div><div class="vl" style="left:387px;top:608px;height:18px;background:#fff"></div>
<div class="vl" style="left:486px;top:608px;height:18px;background:#c2bdb3"></div>
<div class="t" style="left:120px;top:612px;font-size:13px">Âðåìÿ</div>
<div class="t" style="left:220px;top:612px;font-size:13px">Ëèíèÿ</div>
<div class="t" style="left:301px;top:612px;font-size:13px">Ñâåòèëüíèê</div>
<div class="t" style="left:403px;top:612px;font-size:13px">Òèï àâàðèè</div>
<!-- rows -->
<div class="a" style="left:68px;top:629px;width:19px;height:90px;border-right:1px solid #aaa498"></div>
<div class="hl" style="left:70px;top:658px;width:16px;background:#fff"></div>
<div class="hl" style="left:70px;top:688px;width:16px;background:#fff"></div>
<div class="a" style="left:87px;top:658px;width:400px;height:1px;border-top:1px dotted #999"></div>
<div class="a" style="left:87px;top:688px;width:400px;height:1px;border-top:1px dotted #999"></div>
<div class="a" style="left:87px;top:718px;width:400px;height:1px;border-top:1px dotted #999"></div>
<div class="a" style="left:186px;top:629px;width:1px;height:90px;border-left:1px dotted #999"></div>
<div class="a" style="left:286px;top:629px;width:1px;height:90px;border-left:1px dotted #999"></div>
<div class="a" style="left:386px;top:629px;width:1px;height:90px;border-left:1px dotted #999"></div>
<div class="a" style="left:486px;top:629px;width:1px;height:90px;border-left:1px dotted #999"></div>
<div class="t" style="left:73px;top:638px;font-size:13px">1</div>
<div class="t" style="left:73px;top:668px;font-size:13px">2</div>
<div class="t" style="left:73px;top:698px;font-size:13px">3</div>
<div class="t" style="left:90px;top:638px;font-size:13px;letter-spacing:0.3px">19.06.2011 2...</div>
<div class="t" style="left:90px;top:668px;font-size:13px;letter-spacing:0.3px">20.06.2011 0...</div>
<div class="t" style="left:90px;top:698px;font-size:13px;letter-spacing:0.3px">20.06.2011 0...</div>
<div class="t" style="left:190px;top:639px;font-size:12.2px">LINE_A</div>
<div class="t" style="left:190px;top:669px;font-size:12.2px">LINE_A</div>
<div class="t" style="left:190px;top:699px;font-size:12.2px">LINE_A</div>
<div class="t" style="left:290px;top:638px;font-size:13px">A06</div>
<div class="t" style="left:290px;top:668px;font-size:13px">A15</div>
<div class="t" style="left:290px;top:698px;font-size:13px">A16</div>
<div class="t" style="left:390px;top:638px;font-size:13px">Íåâåðíûé ðå...</div>
<div class="t" style="left:390px;top:668px;font-size:13px">Îòêàç ÌÃË</div>
<div class="t" style="left:390px;top:698px;font-size:13px">Ïîòåðÿ ñâÿçè</div>
<!-- size grip -->
<svg class="a" style="left:944px;top:754px" width="13" height="13"><g stroke="#fff" stroke-width="1"><path d="M12.5 1 L1 12.5"/><path d="M12.5 5 L5 12.5"/><path d="M12.5 9 L9 12.5"/></g><g stroke="#aaa498" stroke-width="1"><path d="M12.5 2 L2 12.5"/><path d="M12.5 6 L6 12.5"/><path d="M12.5 10 L10 12.5"/></g></svg>
<div class="a" style="left:958px;top:24px;width:408px;height:744px;background:#fff"></div>
<div class="a" style="left:958px;top:24px;width:408px;height:23px;background:#e8e8e8"></div>
<div class="a" style="left:958px;top:24px;width:408px;height:5px;background:linear-gradient(rgba(0,0,0,0.45),rgba(0,0,0,0))"></div>
<div class="hl" style="left:958px;top:47px;width:408px;background:#a2a2a2"></div>
<div class="a" style="left:958px;top:48px;width:408px;height:27px;background:#e8e8e8"></div>
<div class="hl" style="left:958px;top:75px;width:408px;background:#aaaaaa"></div>
<div class="a" style="left:1158px;top:52px;width:120px;height:19px;border:1px solid #9a9a9a;border-radius:3px;background:linear-gradient(#f6f6f6,#e2e2e2)"></div>
<svg class="a" style="left:1163px;top:53px" width="16" height="17" viewBox="0 0 16 17"><path d="M7.5 1 Q2.5 1 2.5 3.5 V6 H8 V7 H1.8 Q0 7 0 10 Q0 13 1.8 13 H3.5 V10.5 Q3.5 9 5 9 H10 Q11.5 9 11.5 7.5 V3.5 Q11.5 1 7.5 1 Z" fill="#3a74a8"/><path d="M8.5 16 Q13.5 16 13.5 13.5 V11 H8 V10 H14.2 Q16 10 16 7 Q16 4 14.2 4 H12.5 V6.5 Q12.5 8 11 8 H6 Q4.5 8 4.5 9.5 V13.5 Q4.5 16 8.5 16 Z" fill="#f2c830"/><rect x="9.5" y="11" width="6" height="6" fill="#fff"/><text x="10.5" y="16.5" font-size="6" font-family="Liberation Sans" font-weight="bold" fill="#333">2</text></svg>
<div class="t" style="left:1182px;top:55px;font-size:15px;color:#000">test_qgis_2</div>
<svg class="a" style="left:1264px;top:58px" width="9" height="6"><path d="M0 0 H9 L4.5 5 Z" fill="#8a8a8a"/></svg>
<svg class="a" style="left:1286px;top:53px" width="12" height="16"><path d="M1 1 L11.5 7.5 L1 14.5 Z" fill="#3aa83a"/></svg>
<svg class="a" style="left:1308px;top:52px" width="18" height="18" viewBox="0 0 18 18"><g stroke="#444" stroke-width="0.8"><path d="M4.5 1.5 L6 4 M9 1.5 L8.5 4 M4.5 16.5 L6 14 M9 16.5 L8.5 14"/></g><path d="M7.2 3 A5.6 6 0 1 0 12.5 12.5 L12.5 5 A5.6 6 0 0 0 7.2 3 Z" fill="#36b536"/><circle cx="13.2" cy="8.6" r="2.4" fill="#6a6a6a"/><path d="M14.5 5.5 Q16 4.5 17 5" stroke="#555" stroke-width="0.8" fill="none"/><rect x="12" y="11.5" width="5.5" height="6.5" fill="#fff"/><text x="12.6" y="17.6" font-size="7" font-family="Liberation Sans" font-weight="bold" fill="#2a4a8a">2</text></svg>
<div class="vl" style="left:1333px;top:51px;height:22px;background:#c4c4c4"></div>
<svg class="a" style="left:1345px;top:53px" width="18" height="18" viewBox="0 0 18 18"><circle cx="7" cy="7" r="5.2" fill="none" stroke="#8c8c8c" stroke-width="2"/><path d="M11 11 L16 16" stroke="#8c8c8c" stroke-width="2.6" stroke-linecap="round"/></svg>
<div class="a" style="left:958px;top:76px;width:408px;height:24px;background:#e8e8e8"></div>
<div class="a" style="left:958px;top:76px;width:314px;height:24px;background:#d6d6d6"></div>
<div class="vl" style="left:1091px;top:76px;height:24px;background:#b4b4b4"></div>
<div class="vl" style="left:1272px;top:76px;height:24px;background:#b4b4b4"></div>
<svg class="a" style="left:954px;top:80px" width="12" height="16"><path d="M0 3 H8 V8 H0 Z" fill="#3a74a8"/><path d="M2 8 H10 V14 H2 Z" fill="#f2c830"/></svg>
<div class="t" style="left:967px;top:80px;font-size:15.5px;color:#1a1a1a">QDomNode.py</div>
<svg class="a" style="left:1074px;top:84px" width="9" height="9"><path d="M1 1 L8 8 M8 1 L1 8" stroke="#6a6a6a" stroke-width="1.5"/></svg>
<svg class="a" style="left:1101px;top:79px" width="16" height="18" viewBox="0 0 16 18"><path d="M1 1 H9 L12 4 V17 H1 Z" fill="#fafafa" stroke="#999" stroke-width="0.8"/><path d="M6 6 Q3 6 3 8 V9 H7 V10 H2.5 Q1 10 1 12 Q1 14 2.5 14 H4 V12 Q4 11 5 11 H8 Q9 11 9 10 V8 Q9 6 6 6 Z" fill="#3a74a8"/><path d="M7 17 Q10 17 10 15 V14 H6 V13 H10.5 Q12 13 12 11 Q12 9 10.5 9 H10 V11 Q10 12 9 12 H6 Q5 12 5 13 V15 Q5 17 7 17 Z" fill="#f2c830"/></svg>
<div class="t" style="left:1119px;top:80px;font-size:15.5px;color:#1a1a1a">QgsVectorLayer.py</div>
<svg class="a" style="left:1256px;top:84px" width="9" height="9"><path d="M1 1 L8 8 M8 1 L1 8" stroke="#6a6a6a" stroke-width="1.5"/></svg>
<svg class="a" style="left:1338px;top:82px" width="24" height="11"><path d="M0 5 H6 L3 8 Z" fill="#555"/><g fill="#555"><rect x="7" y="1" width="8" height="1.3"/><rect x="7" y="4" width="8" height="1.3"/><rect x="7" y="7" width="8" height="1.3"/><rect x="7" y="9.6" width="8" height="1.3"/></g><text x="16.5" y="10.5" font-size="8.5" font-family="Liberation Sans" font-weight="bold" fill="#3a3a3a">4</text></svg>
<div class="hl" style="left:958px;top:100px;width:408px;background:#a8a8a8"></div>
<div class="a" style="left:958px;top:101px;width:408px;height:3px;background:#fff"></div>
<div class="hl" style="left:958px;top:104px;width:408px;background:#a4a4a4"></div>
<div class="a" style="left:958px;top:105px;width:408px;height:30px;background:#e8e8e8"></div>
<div class="hl" style="left:958px;top:135px;width:408px;background:#c8c8c8"></div>
<div class="a" style="left:962px;top:113px;width:15px;height:14px;border:1px solid #777;border-radius:3px;background:#fff"></div>
<div class="t" style="left:983px;top:115px;font-size:12.6px;color:#333">Regex</div>
<div class="hl" style="left:1002px;top:129px;width:7px;background:#333"></div>
<div class="a" style="left:1032px;top:113px;width:15px;height:14px;border:1px solid #777;border-radius:3px;background:#fff"></div>
<div class="t" style="left:1053px;top:115px;font-size:13.5px;color:#333">Words</div>
<div class="hl" style="left:1075px;top:129px;width:5px;background:#333"></div>
<div class="t" style="left:1112px;top:115px;font-size:12.8px;font-weight:bold;color:#333">3 matches</div>
<svg class="a" style="left:1350px;top:110px" width="11" height="11"><path d="M1 1 L10 10 M10 1 L1 10" stroke="#666" stroke-width="1.4"/></svg>
<div class="a" style="left:958px;top:286px;width:355px;height:15px;background:#fdf8e6"></div>
<div class="a" style="left:1314px;top:286px;width:52px;height:15px;background:#fdf8e6"></div>
<div class="vl" style="left:1313px;top:136px;height:312px;background:#d8d8d8"></div>
<div class="t" style="left:962px;top:139px;font-family:'Liberation Mono';font-size:12px;color:#888">= <i>óìåíüøèòü</i></div>
<div class="t" style="left:956px;top:169px;font-family:'Liberation Mono';font-size:12px;letter-spacing:-0.2px;color:#888">= <i>óâåëè÷èòü</i></div>
<div class="a" style="left:1352px;top:154px;width:14px;height:5px;background:#ecc400"></div>
<div class="a" style="left:1352px;top:161px;width:14px;height:2px;background:#ecc400"></div>
<div class="a" style="left:1352px;top:166px;width:14px;height:2px;background:#d05050"></div>
<div class="a" style="left:1352px;top:171px;width:14px;height:2px;background:#d05050"></div>
<div class="a" style="left:1352px;top:175px;width:14px;height:2px;background:#d8ccb0"></div>
<div class="a" style="left:1352px;top:179px;width:14px;height:3px;background:#ecc400"></div>
<div class="a" style="left:1352px;top:183px;width:14px;height:1px;background:#d8ccb0"></div>
<div class="a" style="left:1352px;top:185px;width:14px;height:2px;background:#ecc400"></div>
<div class="a" style="left:1352px;top:196px;width:14px;height:2px;background:#ecc400"></div>
<div class="a" style="left:1352px;top:202px;width:14px;height:2px;background:#ecc400"></div>
<div class="a" style="left:1352px;top:205px;width:14px;height:2px;background:#d8ccb0"></div>
<div class="a" style="left:1352px;top:207px;width:14px;height:2px;background:#d05050"></div>
<div class="a" style="left:1352px;top:210px;width:14px;height:3px;background:#ecc400"></div>
<div class="a" style="left:1352px;top:215px;width:14px;height:2px;background:#d05050"></div>
<div class="a" style="left:1352px;top:217px;width:14px;height:2px;background:#ecc400"></div>
<div class="a" style="left:1352px;top:224px;width:14px;height:3px;background:#d05050"></div>
<div class="a" style="left:1352px;top:231px;width:14px;height:2px;background:#d05050"></div>
<div class="a" style="left:1352px;top:248px;width:14px;height:2px;background:#ecc400"></div>
<div class="a" style="left:1352px;top:254px;width:14px;height:2px;background:#d05050"></div>
<div class="a" style="left:1352px;top:262px;width:14px;height:2px;background:#d05050"></div>
<div class="a" style="left:1352px;top:266px;width:14px;height:5px;background:#ecc400"></div>
<div class="a" style="left:1352px;top:273px;width:14px;height:1px;background:#d05050"></div>
<div class="a" style="left:1352px;top:275px;width:14px;height:3px;background:#60b060"></div>
<div class="a" style="left:1352px;top:283px;width:14px;height:2px;background:#d8ccb0"></div>
<div class="a" style="left:1352px;top:290px;width:14px;height:3px;background:#ecc400"></div>
<div class="a" style="left:1352px;top:296px;width:14px;height:2px;background:#d8ccb0"></div>
<div class="a" style="left:1352px;top:300px;width:14px;height:2px;background:#d8ccb0"></div>
<div class="a" style="left:1352px;top:310px;width:14px;height:2px;background:#d05050"></div>
<div class="a" style="left:1352px;top:316px;width:14px;height:2px;background:#d8ccb0"></div>
<div class="a" style="left:1352px;top:325px;width:14px;height:9px;background:#ecc400"></div>
<div class="a" style="left:1352px;top:335px;width:14px;height:18px;background:#ecc400"></div>
<div class="a" style="left:1352px;top:354px;width:14px;height:2px;background:#d8ccb0"></div>
<div class="a" style="left:1352px;top:367px;width:14px;height:2px;background:#ecc400"></div>
<div class="a" style="left:1352px;top:371px;width:14px;height:3px;background:#ecc400"></div>
<div class="a" style="left:1352px;top:374px;width:14px;height:3px;background:#d8ccb0"></div>
<div class="a" style="left:1352px;top:378px;width:14px;height:3px;background:#d05050"></div>
<div class="a" style="left:1352px;top:381px;width:14px;height:1px;background:#ecc400"></div>
<div class="a" style="left:1352px;top:382px;width:14px;height:2px;background:#d05050"></div>
<div class="a" style="left:1352px;top:388px;width:14px;height:2px;background:#d8ccb0"></div>
<div class="a" style="left:1352px;top:393px;width:14px;height:2px;background:#60b060"></div>
<div class="a" style="left:1352px;top:397px;width:14px;height:2px;background:#d8ccb0"></div>
<div class="a" style="left:1352px;top:407px;width:14px;height:2px;background:#d8ccb0"></div>
<div class="a" style="left:1352px;top:412px;width:14px;height:1px;background:#d8ccb0"></div>
<div class="a" style="left:1352px;top:414px;width:14px;height:3px;background:#d05050"></div>
<div class="a" style="left:1352px;top:428px;width:14px;height:2px;background:#d05050"></div>
<div class="a" style="left:1352px;top:435px;width:14px;height:2px;background:#ecc400"></div>
<div class="a" style="left:1356px;top:271px;width:10px;height:36px;background:rgba(130,130,130,0.6)"></div>
<svg class="a" style="left:1353px;top:137px" width="12" height="12"><circle cx="6" cy="6" r="5.5" fill="#d04848"/><rect x="5" y="2.5" width="2" height="5" fill="#fff"/><rect x="5" y="8.5" width="2" height="1.8" fill="#fff"/></svg>
<div class="hl" style="left:958px;top:448px;width:408px;background:#b8b8b8"></div>
<div class="a" style="left:958px;top:449px;width:408px;height:25px;background:linear-gradient(#e8e8e8,#d8d8d8)"></div>
<div class="hl" style="left:958px;top:473px;width:408px;background:#a8a8a8"></div>
<svg class="a" style="left:1318px;top:454px" width="18" height="14" viewBox="0 0 18 14"><g fill="#888"><circle cx="6" cy="7" r="4"/><rect x="5" y="1" width="2" height="12"/><rect x="0" y="6" width="12" height="2"/><rect x="5" y="1" width="2" height="12" transform="rotate(45 6 7)"/><rect x="5" y="1" width="2" height="12" transform="rotate(-45 6 7)"/></g><circle cx="6" cy="7" r="1.6" fill="#ddd"/><path d="M13 6 H17 L15 8.5 Z" fill="#888"/></svg>
<svg class="a" style="left:1347px;top:453px" width="12" height="15"><rect x="5.3" y="1" width="1.4" height="8" fill="#888"/><path d="M3 7 H9 L6 10 Z" fill="#888"/><rect x="0.5" y="11.5" width="11" height="3" fill="none" stroke="#888"/></svg>
<div class="a" style="left:958px;top:474px;width:408px;height:28px;background:#e8e8e8"></div>
<div class="hl" style="left:958px;top:501px;width:408px;background:#a8a8a8"></div>
<div class="a" style="left:958px;top:502px;width:408px;height:2px;background:#f4f4f4"></div>
<div class="hl" style="left:958px;top:504px;width:408px;background:#9c9c9c"></div>
<div class="a" style="left:1356px;top:697px;width:10px;height:26px;background:#b4b4b4"></div>
<div class="hl" style="left:958px;top:723px;width:408px;background:#a8a8a8"></div>
<div class="a" style="left:958px;top:724px;width:408px;height:22px;background:#e8e8e8"></div>
<div class="hl" style="left:958px;top:746px;width:408px;background:#a8a8a8"></div>
<div class="a" style="left:958px;top:747px;width:408px;height:21px;background:#e8e8e8"></div>
<svg class="a" style="left:1255px;top:728px" width="17" height="15"><path d="M7.5 0.5 A7 6.5 0 1 0 12 12 L16 14 L13.5 10 A7 6.5 0 0 0 7.5 0.5 Z" fill="#e06e60"/><text x="4.6" y="10.5" font-size="9" font-family="Liberation Sans" font-weight="bold" fill="#fff">2</text></svg>
<div class="t" style="left:1276px;top:729px;font-size:12.8px;color:#111">Event Log</div>
<div class="t" style="left:1175px;top:752px;font-size:14px;color:#111">1785:1</div>
<div class="t" style="left:1229px;top:752px;font-size:14px;color:#111">LF</div>
<svg class="a" style="left:1250px;top:753px" width="5" height="11"><path d="M0 4 L2.5 1 L5 4 Z M0 7 L2.5 10 L5 7 Z" fill="#444"/></svg>
<div class="t" style="left:1268px;top:752px;font-size:13.2px;color:#9a9a9a">UTF-8</div>
<svg class="a" style="left:1322px;top:750px" width="12" height="14"><path d="M2.5 6 V3.5 Q2.5 1 5 1 Q7.5 1 7.5 3.5" fill="none" stroke="#777" stroke-width="1.2"/><rect x="3" y="6" width="8" height="7" fill="#777"/><rect x="6.3" y="8.5" width="1.4" height="2.5" fill="#ddd"/></svg>
<svg class="a" style="left:1345px;top:749px" width="16" height="17" viewBox="0 0 16 17"><path d="M3 7 Q3 1 8 1 Q13 1 13 7" fill="none" stroke="#666" stroke-width="1.2"/><rect x="2" y="6" width="12" height="3" fill="#888"/><path d="M3 9 Q3 16 8 16 Q13 16 13 9" fill="none" stroke="#666" stroke-width="1.2"/><circle cx="5.5" cy="10.5" r="1.3" fill="#666"/><circle cx="10.5" cy="10.5" r="1.3" fill="#666"/><path d="M5 13.5 Q8 12 11 13.5" stroke="#666" fill="none"/></svg>
<div class="a" style="left:957px;top:24px;width:70px;height:744px;background:linear-gradient(to right,rgba(0,0,0,0.44) 0px,rgba(0,0,0,0.33) 3px,rgba(0,0,0,0.21) 8px,rgba(0,0,0,0.13) 15px,rgba(0,0,0,0.09) 22px,rgba(0,0,0,0.05) 33px,rgba(0,0,0,0.02) 48px,rgba(0,0,0,0) 65px)"></div>
<div class="vl" style="left:957px;top:52px;height:716px;background:#9a9488"></div></body></html>
